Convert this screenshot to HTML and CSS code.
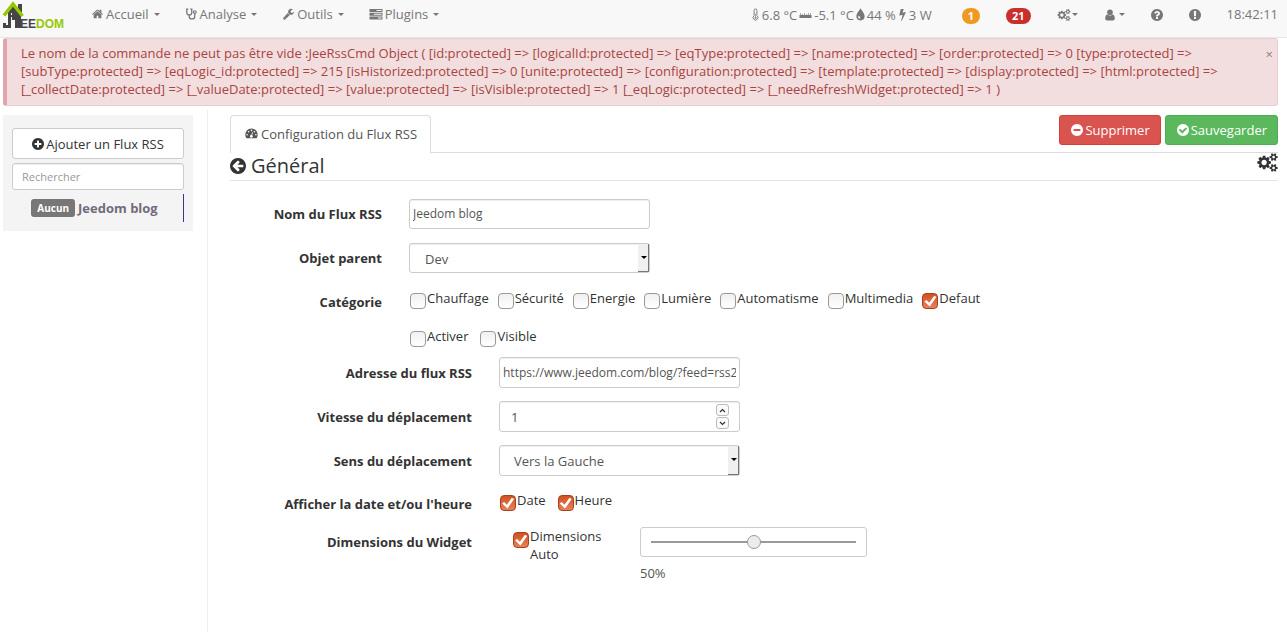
FILE: index.html
```html
<!DOCTYPE html>
<html lang="fr">
<head>
<meta charset="utf-8">
<title>Jeedom</title>
<link rel="stylesheet" href="styles.css">
</head>
<body>
<svg class="sprite" aria-hidden="true">
  <symbol id="home" viewBox="0 0 1664 1792"><path d="M1408 992v480q0 26-19 45t-45 19h-384v-384h-256v384h-384q-26 0-45-19t-19-45v-480q0-1 .5-3t.5-3l575-474 575 474q1 2 1 6zm223-69l-62 74q-8 9-21 11h-3q-13 0-21-7l-692-577-692 577q-12 8-24 7-13-2-21-11l-62-74q-8-10-7-23.5t11-21.5l719-599q32-26 76-26t76 26l244 204v-195q0-14 9-23t23-9h192q14 0 23 9t9 23v408l219 182q10 8 11 21.5t-7 23.5z"/></symbol>
  <symbol id="stethoscope" viewBox="0 0 14 14"><path d="M3.2 1.200H1.500v4a2.900 2.900 0 0 0 5.800 0v-4H5.600M4.400 8.200v1.600a3.200 3 0 0 0 6.400 0V6.400" fill="none" stroke="currentColor" stroke-width="1.500"/><circle cx="10.800" cy="4.800" r="1.600" fill="none" stroke="currentColor" stroke-width="1.400"/></symbol>
  <symbol id="wrench" viewBox="0 0 1792 1792"><path d="M448 1472q0-26-19-45t-45-19-45 19-19 45 19 45 45 19 45-19 19-45zm644-420l-682 682q-37 37-90 37-52 0-91-37l-106-108q-38-36-38-90 0-53 38-91l681-681q39 98 114.5 173.5t173.5 114.5zm634-435q0 39-23 106-47 134-164.5 217.5t-258.5 83.5q-185 0-316.5-131.5t-131.5-316.5 131.5-316.5 316.5-131.5q58 0 121.5 16.5t107.5 46.5q16 11 16 28t-16 28l-293 169v224l193 107q5-3 79-48.5t135.5-81 70.5-35.5q15 0 23.5 10t8.5 25z"/></symbol>
  <symbol id="server" viewBox="0 0 14 12"><path fill-rule="evenodd" d="M.5 1h13v3H.5zM7.500 2v1h5V2zM.5 4.700h13v3H.5zM5 5.700v1h7.500v-1zM.5 8.400h13v3H.5zM9 9.400v1h3.500v-1z"/></symbol>
  <symbol id="thermometer" viewBox="0 0 8 14"><path d="M2.500 8.200V2.500a1.500 1.500 0 0 1 3 0v5.700a2.600 2.600 0 1 1-3 0z" fill="none" stroke="currentColor"/><circle cx="4" cy="10.500" r="1"/><path d="M3.700 6h.6v4h-.6z"/></symbol>
  <symbol id="ruler" viewBox="0 0 13 8"><path d="M.5 4h12v3H.5z"/><path d="M1 2h1v2H1zM3 3h1v1H3zM5 2h1v2H5zM7 3h1v1H7zM9 2h1v2H9zM11 2h1v2h-1z" opacity=".6"/></symbol>
  <symbol id="tint" viewBox="0 0 8 12"><path fill-rule="evenodd" d="M4 0c.6 2.300 3.800 4.500 3.800 7.700a3.800 3.800 0 0 1-7.600 0C.2 4.500 3.400 2.300 4 0zM2.500 7Q1.500 8.300 2 9.200t1.800.4Q4 8.600 2.500 7z"/></symbol>
  <symbol id="bolt" viewBox="384 0 1024 1792"><path d="M1333 566q18 20 7 44l-540 1157q-13 25-42 25-4 0-14-2-17-5-25.500-19t-4.500-30l197-808-406 101q-4 1-12 1-18 0-31-11-18-15-13-39l201-825q4-14 16-23t28-9h328q19 0 32 12.500t13 29.500q0 8-5 18l-171 463 396-98q8-2 12-2 19 0 34 15z"/></symbol>
  <symbol id="cogs" viewBox="0 0 1920 1792"><path d="M896 896q0-106-75-181t-181-75-181 75-75 181 75 181 181 75 181-75 75-181zm768 512q0-52-38-90t-90-38-90 38-38 90q0 53 37.500 90.500t90.500 37.500 90.500-37.500 37.500-90.500zm0-1024q0-52-38-90t-90-38-90 38-38 90q0 53 37.500 90.500t90.500 37.500 90.500-37.500 37.500-90.500zm-384 421v185q0 10-7 19.500t-16 10.500l-155 24q-11 35-32 76 34 48 90 115 7 11 7 20 0 12-7 19-23 30-82.500 89.500t-78.500 59.500q-11 0-21-7l-115-90q-37 19-77 31-11 108-23 155-7 24-30 24h-186q-11 0-20-7.500t-10-17.500l-23-153q-34-10-75-31l-118 89q-7 7-20 7-11 0-21-8-144-133-144-160 0-9 7-19 10-14 41-53t47-61q-23-44-35-82l-152-24q-10-1-17-9.500t-7-19.500v-185q0-10 7-19.500t16-10.500l155-24q11-35 32-76-34-48-90-115-7-11-7-20 0-12 7-20 22-30 82-89t79-59q11 0 21 7l115 90q34-18 77-32 11-108 23-154 7-24 30-24h186q11 0 20 7.500t10 17.500l23 153q34 10 75 31l118-89q8-7 20-7 11 0 21 8 144 133 144 160 0 8-7 19-12 16-42 54t-45 60q23 48 34 82l152 23q10 2 17 10.500t7 19.500zm640 533v140q0 16-149 31-12 27-30 52 51 113 51 138 0 4-4 7-122 71-124 71-8 0-46-47t-52-68q-20 2-30 2t-30-2q-14 21-52 68t-46 47q-2 0-124-71-4-3-4-7 0-25 51-138-18-25-30-52-149-15-149-31v-140q0-16 149-31 13-29 30-52-51-113-51-138 0-4 4-7 4-2 35-20t59-34 30-16q8 0 46 46.500t52 67.500q20-2 30-2t30 2q51-71 92-112l6-2q4 0 124 70 4 3 4 7 0 25-51 138 17 23 30 52 149 15 149 31zm0-1024v140q0 16-149 31-12 27-30 52 51 113 51 138 0 4-4 7-122 71-124 71-8 0-46-47t-52-68q-20 2-30 2t-30-2q-14 21-52 68t-46 47q-2 0-124-71-4-3-4-7 0-25 51-138-18-25-30-52-149-15-149-31v-140q0-16 149-31 13-29 30-52-51-113-51-138 0-4 4-7 4-2 35-20t59-34 30-16q8 0 46 46.500t52 67.500q20-2 30-2t30 2q51-71 92-112l6-2q4 0 124 70 4 3 4 7 0 25-51 138 17 23 30 52 149 15 149 31z"/></symbol>
  <symbol id="user" viewBox="0 0 10 12"><circle cx="5" cy="3.200" r="2.800"/><path d="M2.300 5.200C.8 5.800.2 7.500.2 9.600c0 1.200.8 1.900 1.800 1.900h6c1 0 1.800-.7 1.800-1.900 0-2.100-.6-3.800-2.100-4.400C6.200 7 3.800 7 2.300 5.200z"/></symbol>
  <symbol id="question" viewBox="128 128 1536 1536"><path d="M1024 1376v-192q0-14-9-23t-23-9h-192q-14 0-23 9t-9 23v192q0 14 9 23t23 9h192q14 0 23-9t9-23zm256-672q0-88-55.500-163t-138.500-116-170-41q-243 0-371 213-15 24 8 42l132 100q7 6 19 6 16 0 25-12 53-68 86-92 34-24 86-24 48 0 85.500 26t37.500 59q0 38-20 61t-68 45q-63 28-115.500 86.500t-52.500 125.500v36q0 14 9 23t23 9h192q14 0 23-9t9-23q0-19 21.500-49.500t54.500-49.500q32-18 49-28.500t46-35 44.500-48 28-60.500 12.500-81zm384 192q0 209-103 385.500t-279.500 279.500-385.500 103-385.500-103-279.500-279.500-103-385.500 103-385.500 279.500-279.500 385.500-103 385.500 103 279.500 279.500 103 385.500z"/></symbol>
  <symbol id="exclamation" viewBox="128 128 1536 1536"><path d="M896 128q209 0 385.500 103t279.500 279.500 103 385.500-103 385.500-279.500 279.500-385.500 103-385.500-103-279.500-279.500-103-385.500 103-385.500 279.500-279.500 385.500-103zm128 1247v-190q0-14-9-23.500t-22-9.500h-192q-13 0-23 10t-10 23v190q0 13 10 23t23 10h192q13 0 22-9.500t9-23.500zm-2-344l18-621q0-12-10-18-10-8-24-8h-220q-14 0-24 8-10 6-10 18l17 621q0 10 10 17.500t24 7.500h185q14 0 23.500-7.500t10.500-17.500z"/></symbol>
  <symbol id="plus" viewBox="128 128 1536 1536"><path d="M1344 960v-128q0-26-19-45t-45-19h-256v-256q0-26-19-45t-45-19h-128q-26 0-45 19t-19 45v256h-256q-26 0-45 19t-19 45v128q0 26 19 45t45 19h256v256q0 26 19 45t45 19h128q26 0 45-19t19-45v-256h256q26 0 45-19t19-45zm320-64q0 209-103 385.500t-279.500 279.500-385.500 103-385.500-103-279.500-279.500-103-385.500 103-385.500 279.500-279.500 385.500-103 385.500 103 279.500 279.500 103 385.500z"/></symbol>
  <symbol id="minus" viewBox="128 128 1536 1536"><path d="M1344 960v-128q0-26-19-45t-45-19h-768q-26 0-45 19t-19 45v128q0 26 19 45t45 19h768q26 0 45-19t19-45zm320-64q0 209-103 385.500t-279.500 279.500-385.500 103-385.500-103-279.500-279.500-103-385.500 103-385.500 279.500-279.500 385.500-103 385.500 103 279.500 279.500 103 385.500z"/></symbol>
  <symbol id="check" viewBox="128 128 1536 1536"><path d="M1412 734q0-28-18-46l-91-90q-19-19-45-19t-45 19l-408 407-226-226q-19-19-45-19t-45 19l-91 90q-18 18-18 46 0 27 18 45l362 362q19 19 45 19 27 0 46-19l543-543q18-18 18-45zm252 162q0 209-103 385.500t-279.500 279.500-385.500 103-385.500-103-279.500-279.500-103-385.500 103-385.500 279.500-279.500 385.500-103 385.500 103 279.500 279.500 103 385.500z"/></symbol>
  <symbol id="back" viewBox="128 128 1536 1536"><path d="M1408 960v-128q0-26-19-45t-45-19h-502l189-189q19-19 19-45t-19-45l-91-91q-18-18-45-18t-45 18l-362 362-91 91q-18 18-18 45t18 45l91 91 362 362q18 18 45 18t45-18l91-91q18-18 18-45t-18-45l-189-189h502q26 0 45-19t19-45zm256-64q0 209-103 385.500t-279.500 279.500-385.500 103-385.500-103-279.500-279.500-103-385.500 103-385.500 279.500-279.500 385.500-103 385.500 103 279.500 279.500 103 385.500z"/></symbol>
  <symbol id="gauge" viewBox="0 0 14 12"><path fill-rule="evenodd" d="M1.300 11A6.500 6.500 0 0 1 .2 7.300a6.800 6.800 0 0 1 13.600 0A6.500 6.500 0 0 1 12.700 11q-.2.300-.6.300H1.900q-.4 0-.6-.3zM1.300 7.400a.9.900 0 1 0 1.800 0 .9.900 0 1 0-1.800 0zM2.900 4.100a.9.900 0 1 0 1.800 0 .9.900 0 1 0-1.800 0zM6.100 2.600a.9.900 0 1 0 1.800 0 .9.900 0 1 0-1.800 0zM9.300 4.100a.9.900 0 1 0 1.800 0 .9.900 0 1 0-1.800 0zM10.900 7.400a.9.900 0 1 0 1.800 0 .9.900 0 1 0-1.800 0zM7.700 4.600l-.9 3a1.500 1.500 0 1 0 .9.300l.8-3.100z"/></symbol>
</svg>

<header class="navbar">
  <a class="logo" href="#" aria-label="Jeedom">
    <svg viewBox="0 0 64 32" width="64" height="32">
      <path d="M8 12l5-6 8 9v13h-6v-8H8z" fill="#454547"/>
      <path d="M18 4h4v9l-4-4z" fill="#454547"/>
      <path d="M9.500 15v11.500H4.500V23" fill="none" stroke="#454547" stroke-width="3"/>
      <path d="M11.500 13v2M11.500 17v10.500" stroke="#f8f8f8" stroke-width="1"/>
      <path d="M4 15.500L13 4l9.500 12" fill="none" stroke="#96c800" stroke-width="3.500"/>
      <text class="logo-text" x="20" y="28" fill="#454547">EE<tspan fill="#96c800">DOM</tspan></text>
    </svg>
  </a>
  <nav class="menu">
    <a href="#"><svg class="icon"><use href="#home"/></svg>Accueil<span class="caret"></span></a>
    <a href="#"><svg class="icon"><use href="#stethoscope"/></svg>Analyse<span class="caret"></span></a>
    <a href="#"><svg class="icon"><use href="#wrench"/></svg>Outils<span class="caret"></span></a>
    <a href="#"><svg class="icon icon-wide"><use href="#server"/></svg>Plugins<span class="caret"></span></a>
  </nav>
  <div class="status">
    <a class="weather" href="#"><svg class="icon icon-slim"><use href="#thermometer"/></svg><span>6.8 °C</span><svg class="icon"><use href="#ruler"/></svg><span>-5.1 °C</span><svg class="icon icon-slim"><use href="#tint"/></svg><span>44 %</span><svg class="icon icon-slim"><use href="#bolt"/></svg><span>3 W</span></a>
    <a class="badge badge-warn" href="#">1</a>
    <a class="badge badge-error" href="#">21</a>
    <a href="#" aria-label="Réglages"><svg class="icon icon-wide"><use href="#cogs"/></svg><span class="caret caret-tight"></span></a>
    <a href="#" aria-label="Profil"><svg class="icon icon-small"><use href="#user"/></svg><span class="caret"></span></a>
    <a href="#" aria-label="Aide"><svg class="icon icon-small"><use href="#question"/></svg></a>
    <a href="#" aria-label="Signaler"><svg class="icon icon-small"><use href="#exclamation"/></svg></a>
    <span>18:42:11</span>
  </div>
</header>

<div class="alert" role="alert">
  <p>Le nom de la commande ne peut pas être vide :JeeRssCmd Object ( [id:protected] =&gt; [logicalId:protected] =&gt; [eqType:protected] =&gt; [name:protected] =&gt; [order:protected] =&gt; 0 [type:protected] =&gt; [subType:protected] =&gt; [eqLogic_id:protected] =&gt; 215 [isHistorized:protected] =&gt; 0 [unite:protected] =&gt; [configuration:protected] =&gt; [template:protected] =&gt; [display:protected] =&gt; [html:protected] =&gt; [_collectDate:protected] =&gt; [_valueDate:protected] =&gt; [value:protected] =&gt; [isVisible:protected] =&gt; 1 [_eqLogic:protected] =&gt; [_needRefreshWidget:protected] =&gt; 1 )</p>
  <button class="close" type="button" aria-label="Fermer">×</button>
</div>

<div class="page">
  <aside class="sidebar">
    <button class="btn btn-default" type="button"><svg class="icon icon-small"><use href="#plus"/></svg>Ajouter un Flux RSS</button>
    <input class="field search" type="search" placeholder="Rechercher" aria-label="Rechercher">
    <a class="device" href="#"><span class="tag">Aucun</span>Jeedom blog</a>
  </aside>

  <main class="content">
    <div class="toolbar">
      <a class="tab" href="#"><svg class="icon icon-tab"><use href="#gauge"/></svg>Configuration du Flux RSS</a>
      <div class="actions">
        <button class="btn btn-danger" type="button"><svg class="icon icon-small"><use href="#minus"/></svg>Supprimer</button>
        <button class="btn btn-success" type="button"><svg class="icon icon-small"><use href="#check"/></svg>Sauvegarder</button>
      </div>
    </div>
    <div class="legend">
      <svg class="icon icon-back"><use href="#back"/></svg>
      <h1>Général</h1>
      <button class="config" type="button" aria-label="Configuration avancée"><svg class="icon icon-cogs"><use href="#cogs"/></svg></button>
    </div>

    <form class="form">
      <div class="row">
        <label class="name" for="nom">Nom du Flux RSS</label>
        <input class="field text" id="nom" type="text" value="Jeedom blog">
      </div>
      <div class="row">
        <label class="name" for="parent">Objet parent</label>
        <div class="select"><select class="field" id="parent"><option>Dev</option></select></div>
      </div>
      <div class="row row-checks">
        <span class="name">Catégorie</span>
        <div class="checks">
          <label class="check"><input type="checkbox">Chauffage</label>
          <label class="check"><input type="checkbox">Sécurité</label>
          <label class="check"><input type="checkbox">Energie</label>
          <label class="check"><input type="checkbox">Lumière</label>
          <label class="check"><input type="checkbox">Automatisme</label>
          <label class="check"><input type="checkbox">Multimedia</label>
          <label class="check"><input type="checkbox" checked>Defaut</label>
        </div>
      </div>
      <div class="row row-checks">
        <span></span>
        <div class="checks checks-loose">
          <label class="check"><input type="checkbox">Activer</label>
          <label class="check"><input type="checkbox">Visible</label>
        </div>
      </div>
      <div class="row row-deep">
        <label class="name" for="url">Adresse du flux RSS</label>
        <input class="field text" id="url" type="text" value="https://www.jeedom.com/blog/?feed=rss2">
      </div>
      <div class="row row-deep">
        <label class="name" for="vitesse">Vitesse du déplacement</label>
        <div class="number">
          <input class="field" id="vitesse" type="number" value="1">
          <span class="spin">
            <button type="button" aria-label="Augmenter"><svg viewBox="0 0 7 5"><path d="M1 4l2.500-2.500L6 4"/></svg></button>
            <button type="button" aria-label="Diminuer"><svg viewBox="0 0 7 5"><path d="M1 1l2.500 2.500L6 1"/></svg></button>
          </span>
        </div>
      </div>
      <div class="row row-deep">
        <label class="name" for="sens">Sens du déplacement</label>
        <div class="select"><select class="field" id="sens"><option>Vers la Gauche</option></select></div>
      </div>
      <div class="row row-deep row-checks">
        <span class="name">Afficher la date et/ou l'heure</span>
        <div class="checks checks-loose">
          <label class="check"><input type="checkbox" checked>Date</label>
          <label class="check"><input type="checkbox" checked>Heure</label>
        </div>
      </div>
      <div class="row row-deep row-size">
        <span class="name">Dimensions du Widget</span>
        <label class="check check-auto"><input type="checkbox" checked><span>Dimensions Auto</span></label>
        <div class="size">
          <input class="field slider" type="range" value="50" aria-label="Dimensions du Widget">
          <output>50%</output>
        </div>
      </div>
    </form>
  </main>
</div>
</body>
</html>
```

FILE: styles.css
```css
* { box-sizing: border-box; }

body {
  margin: 0;
  min-height: 100vh;
  display: flex;
  flex-direction: column;
  font: 13px/18px "Open Sans", "Noto Sans", sans-serif;
  color: #333;
  background: #fff;
}

a { color: inherit; text-decoration: none; }
button, input, select { font: inherit; color: inherit; }
button { cursor: pointer; }

.sprite { position: absolute; width: 0; height: 0; }
.icon { width: 13px; height: 12px; flex: none; fill: currentColor; }
.icon-slim { width: 9px; height: 13px; }
.icon-small { width: 12px; height: 12px; }
.icon-wide { width: 14px; height: 12px; }
.icon-tab { width: 13px; height: 11px; }
.icon-back { width: 16px; height: 16px; }
.icon-cogs { width: 21px; height: 19px; }

/* Top bar */
.navbar {
  display: flex;
  align-items: flex-start;
  min-height: 38px;
  padding-right: 9px;
  color: #777;
  background: #f8f8f8;
  border-bottom: 1px solid #e7e7e7;
}
.logo { width: 91px; height: 32px; }
.logo svg { display: block; }
.logo-text { font: bold 12px "Liberation Sans", sans-serif; }
.menu, .status { display: flex; gap: 26px; padding-top: 5px; }
.menu { gap: 25px; }
.menu a, .status a { display: flex; align-items: center; min-height: 18px; }
.menu a { gap: 2px; }
.status { margin-left: auto; }
.status .weather { gap: 2px; margin-right: 4px; }
.caret {
  margin-left: 3px;
  border: 3px solid transparent;
  border-top-color: currentColor;
  border-bottom: 0;
}
.caret-tight { margin-left: 1px; }
.status .badge {
  align-self: flex-start;
  margin-top: 3px;
  min-height: 16px;
  padding: 0 6px;
  border-radius: 8px;
  font-size: 11px;
  line-height: 16px;
  font-weight: bold;
  color: #fff;
}
.badge-warn { background: #ee9a20; }
.badge-error { background: #c9302c; }

/* Error message */
.alert {
  display: flex;
  justify-content: space-between;
  margin: 0 9px 4px 3px;
  padding: 5px 4px 7px 14px;
  color: #a94442;
  background: #f2dede;
  border: 1px solid #ebccd1;
  border-left: 4px solid #dfa5a8;
  border-radius: 3px;
}
.alert p { margin: 0; max-width: 1200px; }
.close {
  align-self: flex-start;
  padding: 0;
  border: 0;
  background: none;
  font-size: 13px;
  line-height: 20px;
  color: #8c7f7f;
}

/* Page columns */
.page { display: flex; flex: 1; padding: 0 9px 0 3px; }
.sidebar {
  display: flex;
  flex-direction: column;
  gap: 4px;
  align-self: flex-start;
  width: 190px;
  margin: 5px 14px 0 0;
  padding: 13px 9px 9px;
  background: #f4f4f4;
}
.content {
  flex: 1;
  min-width: 0;
  padding: 5px 0 0 22px;
  border-left: 1px solid #eee;
}

.btn {
  display: flex;
  align-items: center;
  justify-content: center;
  gap: 3px;
  height: 31px;
  padding: 0 12px;
  border: 1px solid #ccc;
  border-radius: 3px;
  background: #fff;
}
.btn-default { gap: 2px; }
.btn-danger, .btn-success { gap: 2px; height: 30px; padding: 0 10px 0 11px; color: #fff; }
.btn-danger { background: #d9534f; border-color: #d43f3a; }
.btn-success { background: #5cb85c; border-color: #4cae4c; }

.field {
  display: block;
  width: 100%;
  height: 30px;
  margin: 0;
  padding: 0 12px;
  border: 1px solid #ccc;
  border-radius: 3px;
  color: #555;
  background: #fff;
  box-shadow: inset 0 1px 1px rgba(0, 0, 0, .07);
  appearance: none;
}
.field.text { padding: 0 3px 1px; font-size: 12px; }
.field.search { height: 27px; padding: 0 9px; font-size: 11px; }
.search::placeholder { color: #999; }

.device {
  display: flex;
  align-items: center;
  justify-content: center;
  gap: 3px;
  height: 28px;
  padding-right: 8px;
  padding-left: 2px;
  border-right: 1px solid #46327d;
  font-weight: bold;
  color: #716b7a;
}
.tag {
  padding: 0 6px;
  border-radius: 3px;
  font-size: 10px;
  line-height: 18px;
  color: #fff;
  background: #777;
}

/* Tab and actions */
.toolbar {
  display: flex;
  justify-content: space-between;
  align-items: flex-start;
  border-bottom: 1px solid #ddd;
}
.tab {
  display: flex;
  align-items: center;
  gap: 3px;
  height: 38px;
  margin-bottom: -1px;
  padding: 0 13px 2px 14px;
  border: 1px solid #ddd;
  border-bottom: 0;
  border-radius: 4px 4px 0 0;
  color: #555;
  background: #fff;
}
.actions { display: flex; gap: 4px; }

.legend {
  display: flex;
  align-items: center;
  gap: 5px;
  height: 28px;
  padding-bottom: 2px;
  border-bottom: 1px solid #e5e5e5;
}
.legend h1 { margin: 0; font-size: 20px; line-height: 25px; font-weight: normal; }
.config {
  align-self: flex-start;
  display: flex;
  margin-left: auto;
  padding: 0;
  border: 0;
  background: none;
}

/* Form */
.form { display: flex; flex-direction: column; padding-top: 18px; }
.row {
  display: grid;
  grid-template-columns: 152px 23% 1fr;
  column-gap: 27px;
  align-items: start;
  margin-bottom: 14px;
}
.row-deep { grid-template-columns: 242px 23% 1fr; }
.row-deep:not(.row-checks) { margin-bottom: 13px; }
.row-deep .field { height: 31px; }
.name { padding-top: 6px; text-align: right; font-weight: bold; }
.row-deep:not(.row-checks):not(.row-size) > .name { padding-top: 7px; }
.row-checks { margin-bottom: 12px; }
.row-checks > .name { min-height: 26px; }

.checks { display: flex; gap: 9px; grid-column: 2 / -1; padding: 2px 0 0 1px; }
.checks-loose { gap: 12px; }
.check { display: flex; align-items: flex-start; gap: 1px; }
.check input {
  flex: none;
  width: 16px;
  height: 16px;
  margin: 4px 0 0;
  border: 1px solid #999;
  border-radius: 4px;
  background: linear-gradient(#f0f0f0, #fff);
  appearance: none;
}
.checks .check { height: 18px; }
.check input:checked {
  border-color: #a5431f;
  background: linear-gradient(#d2501f, #e8815a);
}
.check input:checked::before {
  content: "";
  display: block;
  width: 14px;
  height: 14px;
  background: #fff;
  clip-path: polygon(8% 54%, 22% 42%, 42% 62%, 78% 12%, 94% 22%, 46% 90%);
}

.select { position: relative; }
.select .field { padding: 1px 15px 0; }
.row-deep .select .field { padding-left: 14px; }
.select::before {
  content: "";
  position: absolute;
  top: 1px;
  right: 1px;
  bottom: 1px;
  width: 10px;
  border: solid #777;
  border-width: 0 1px 1px 0;
  background: #f0f0ee;
  pointer-events: none;
}
.select::after {
  content: "";
  position: absolute;
  top: 13px;
  right: 3px;
  border: 3px solid transparent;
  border-top-color: #000;
  border-bottom: 0;
  pointer-events: none;
}

.number { position: relative; }
.number .field { padding-left: 11px; appearance: textfield; }
.number .field::-webkit-inner-spin-button { appearance: none; }
.spin {
  position: absolute;
  top: 3px;
  right: 11px;
  display: grid;
  gap: 1px;
}
.spin button {
  display: flex;
  align-items: center;
  justify-content: center;
  width: 13px;
  height: 12px;
  padding: 0;
  border: 1px solid #bbb;
  border-radius: 3px;
  background: #fafafa;
}
.spin svg { width: 7px; height: 5px; fill: none; stroke: #333; stroke-width: 1.2; }

.row-size { grid-template-columns: 242px 100px 1fr; }
.check-auto { margin-left: 14px; }
.check-auto input { margin-top: 5px; }
.size { width: 37%; padding-left: 14px; }
.size .slider { height: 30px; padding: 0 10px; box-shadow: none; }
.slider::-webkit-slider-runnable-track { height: 2px; background: #999; }
.slider::-webkit-slider-thumb {
  width: 14px;
  height: 14px;
  margin-top: -6px;
  border: 1px solid #999;
  border-radius: 50%;
  background: #ececec;
  appearance: none;
}
.size output { display: block; margin-top: 7px; color: #555; }
```
